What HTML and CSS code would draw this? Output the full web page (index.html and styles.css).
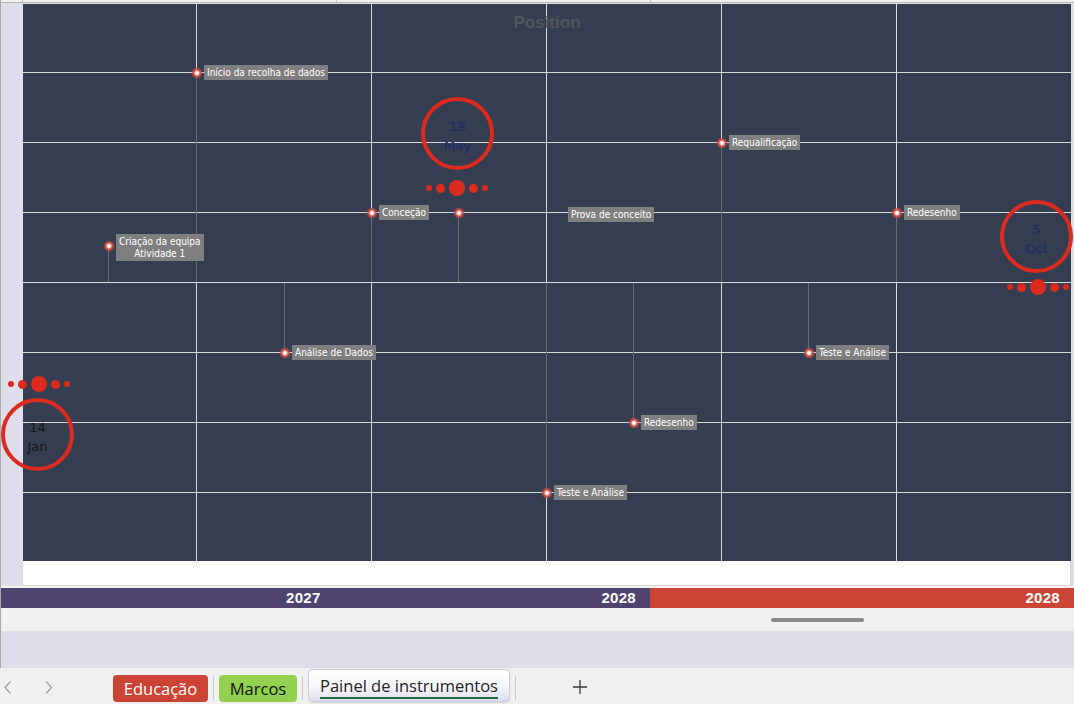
FILE: index.html
```html
<!DOCTYPE html>
<html lang="pt">
<head>
<meta charset="utf-8">
<title>Painel de instrumentos</title>
<link rel="stylesheet" href="styles.css">
</head>
<body>
<div class="upper">
  <div class="colhead"><span class="cell c0"></span><span class="cell c1"></span><span class="cell c2"></span><span class="cell c3"></span></div>
  <div class="rule"></div>
  <div class="rule2"></div>
  <div class="sheet">
    <div class="gutter"></div>
    <div class="chart">
      <div class="plot">
        <svg class="grid" width="1048" height="557" viewBox="0 0 1048 557">
          <g class="gl">
            <line x1="173.5" y1="0" x2="173.5" y2="557"/>
            <line x1="348.5" y1="0" x2="348.5" y2="557"/>
            <line x1="523.5" y1="0" x2="523.5" y2="557"/>
            <line x1="698.5" y1="0" x2="698.5" y2="557"/>
            <line x1="873.5" y1="0" x2="873.5" y2="557"/>
            <line x1="0" y1="68.5" x2="1048" y2="68.5"/>
            <line x1="0" y1="138.5" x2="1048" y2="138.5"/>
            <line x1="0" y1="208.5" x2="1048" y2="208.5"/>
            <line x1="0" y1="278.5" x2="1048" y2="278.5"/>
            <line x1="0" y1="348.5" x2="1048" y2="348.5"/>
            <line x1="0" y1="418.5" x2="1048" y2="418.5"/>
            <line x1="0" y1="488.5" x2="1048" y2="488.5"/>
          </g>
          <g class="stem">
            <line x1="85.5" y1="241" x2="85.5" y2="278"/>
            <line x1="173.5" y1="68" x2="173.5" y2="278"/>
            <line x1="261.5" y1="279" x2="261.5" y2="348"/>
            <line x1="348.5" y1="209" x2="348.5" y2="278"/>
            <line x1="435.5" y1="209" x2="435.5" y2="278"/>
            <line x1="523.5" y1="279" x2="523.5" y2="488"/>
            <line x1="610.5" y1="279" x2="610.5" y2="418"/>
            <line x1="698.5" y1="139" x2="698.5" y2="278"/>
            <line x1="785.5" y1="279" x2="785.5" y2="348"/>
            <line x1="873.5" y1="209" x2="873.5" y2="278"/>
          </g>
        </svg>

        <div class="title">Position</div>

        <div class="node" style="left:85.5px;top:241.5px"><span class="dot"></span><span class="tag two">Criação da equipa<br>Atividade 1</span></div>
        <div class="node" style="left:173.5px;top:68.5px"><span class="dot"></span><span class="tag">Início da recolha de dados</span></div>
        <div class="node" style="left:261.5px;top:348.5px"><span class="dot"></span><span class="tag">Análise de Dados</span></div>
        <div class="node" style="left:348.5px;top:208.5px"><span class="dot"></span><span class="tag">Conceção</span></div>
        <div class="node" style="left:435.5px;top:208.5px"><span class="dot"></span></div>
        <div class="node" style="left:537.5px;top:210.5px"><span class="tag">Prova de conceito</span></div>
        <div class="node" style="left:523.5px;top:488.5px"><span class="dot"></span><span class="tag">Teste e Análise</span></div>
        <div class="node" style="left:610.5px;top:418.5px"><span class="dot"></span><span class="tag">Redesenho</span></div>
        <div class="node" style="left:698.5px;top:138.5px"><span class="dot"></span><span class="tag">Requalificação</span></div>
        <div class="node" style="left:785.5px;top:348.5px"><span class="dot"></span><span class="tag">Teste e Análise</span></div>
        <div class="node" style="left:873.5px;top:208.5px"><span class="dot"></span><span class="tag">Redesenho</span></div>

        <div class="bubble" style="left:398px;top:93px"><span>18</span><span>May</span></div>
        <div class="beads" style="left:403px;top:176px"><i class="b1"></i><i class="b2"></i><i class="b3"></i><i class="b2"></i><i class="b1"></i></div>

        <div class="bubble" style="left:977px;top:196px"><span>5</span><span>Oct</span></div>
        <div class="beads" style="left:984px;top:275px"><i class="b1"></i><i class="b2"></i><i class="b3"></i><i class="b2"></i><i class="b1"></i></div>

        <div class="bubble dark" style="left:-22px;top:394px"><span>14</span><span>Jan</span></div>
        <div class="beads" style="left:-15px;top:372px"><i class="b1"></i><i class="b2"></i><i class="b3"></i><i class="b2"></i><i class="b1"></i></div>
      </div>
      <div class="plot-foot"></div>
    </div>
    <div class="gutter-r"></div>
  </div>
  <div class="years">
    <div class="y-a"><span class="t1">2027</span><span class="t2">2028</span></div>
    <div class="y-b"><span>2028</span></div>
  </div>
  <div class="hscroll"><span class="thumb"></span></div>
  <div class="blank"></div>
</div>
<div class="tabbar">
  <div class="nav">
    <svg class="chev first" width="8" height="13" viewBox="0 0 8 13"><path d="M6.5 0.5 L1 6.5 L6.5 12.5"/></svg>
    <svg class="chev" width="8" height="13" viewBox="0 0 8 13"><path d="M1 0.5 L6.5 6.5 L1 12.5"/></svg>
  </div>
  <div class="tab red">Educação</div>
  <span class="sep"></span>
  <div class="tab green">Marcos</div>
  <span class="sep"></span>
  <div class="tab active"><span class="lbl">Painel de instrumentos</span></div>
  <span class="sep"></span>
  <svg class="plus" width="14" height="14" viewBox="0 0 14 14"><path d="M7 0 V14 M0 7 H14"/></svg>
</div>
</body>
</html>
```

FILE: styles.css
```css
* { box-sizing: border-box; margin: 0; padding: 0; }
html, body { width: 1074px; height: 704px; overflow: hidden; }
body { background: #f0f0f0; font-family: "Liberation Sans", Arial, sans-serif; }

.upper { border-left: 1px solid #a9a9a9; background: #f0f0f0; }

.colhead { display: flex; height: 2px; background: #f3f3f3; }
.cell { display: block; height: 2px; border-right: 1px solid #c4c4c4; }
.c0 { width: 22px; }
.c1 { width: 314px; }
.c2 { width: 314px; }
.c3 { flex: 1; border-right: 0; }
.rule { height: 1px; background: #b3b3b3; }
.rule2 { height: 1px; background: #e4e4e4; }

.sheet { display: flex; height: 582px; }
.gutter { width: 22px; background: #dfdde9; }
.gutter-r { flex: 1; background: #dfdde9; }
.chart { width: 1048px; display: flex; flex-direction: column; }
.plot { position: relative; height: 557px; background: #353e50; }
.plot-foot { flex: 1; background: #fff; border-bottom: 1px solid #d4d4d4; border-right: 1px solid #d4d4d4; }

.grid { position: absolute; left: 0; top: 0; display: block; }
.gl line { stroke: #d9d9d9; stroke-width: 1; }
.stem line { stroke: #6a6a6a; stroke-width: 1; }

.title {
  position: absolute; left: 0; right: 0; top: 9px;
  text-align: center; font: bold 17px/20px "Liberation Sans", Arial, sans-serif;
  color: #50555e;
}

.node { position: absolute; width: 0; height: 0; }
.dot {
  position: absolute; left: -6px; top: -6px; width: 12px; height: 12px; border-radius: 50%;
  background: radial-gradient(circle closest-side, #fff 0, #fff 20%, #f6c6bf 32%, #d8534a 52%, rgba(205,70,60,.6) 76%, rgba(205,70,60,0) 100%);
}
.tag {
  position: absolute; left: 7.5px; top: -7.5px; height: 15px;
  padding: 0 3px; background: #7f7f7f; color: #fff; white-space: nowrap;
  font-family: "DejaVu Sans Condensed", "Liberation Sans", Arial, sans-serif;
  font-size: 10px; line-height: 15px;
}
.tag.two { top: -11.5px; height: 27px; line-height: 12px; padding: 1.5px 3px; text-align: center; }

.bubble {
  position: absolute; width: 73px; height: 73px; border: 4px solid #dc2a1f; border-radius: 50%;
  display: flex; flex-direction: column; align-items: center; justify-content: center;
  padding-top: 4px;
  font: 13px/19px "DejaVu Sans", sans-serif; color: #1a2b6c;
}
.bubble.dark { color: #151515; }
.beads { position: absolute; height: 16px; display: flex; align-items: center; gap: 4px; }
.beads i { display: block; border-radius: 50%; background: #dc2a1f; }
.beads .b1 { width: 6px; height: 6px; }
.beads .b2 { width: 9px; height: 9px; }
.beads .b3 { width: 16px; height: 16px; }

.years { display: flex; height: 20px; margin-top: 2px; color: #fff; font: bold 15px/20px "Liberation Sans", Arial, sans-serif; letter-spacing: 0.3px; }
.y-a { width: 649px; background: #4f4470; display: flex; }
.y-a .t1 { margin-left: 285px; }
.y-a .t2 { margin-left: auto; margin-right: 14px; }
.y-b { flex: 1; background: #cb4535; text-align: right; padding-right: 14px; }

.hscroll { height: 23px; padding-top: 10px; }
.thumb { display: block; width: 93px; height: 4px; margin-left: 770px; border-radius: 2px; background: #8a8a8a; }

.blank { height: 37px; background: #dfdde9; }

.tabbar { height: 36px; display: flex; align-items: flex-start; background: #f0f0f0; font-family: "Open Sans", "Noto Sans", sans-serif; font-size: 16.5px; }
.nav { width: 113px; display: flex; margin-top: 13px; padding-left: 4px; }
.chev { display: block; }
.chev path { fill: none; stroke: #9d9d9d; stroke-width: 1.2; }
.chev.first { margin-right: 33px; }
.tab { height: 27px; margin-top: 7px; border-radius: 4px; display: flex; align-items: center; justify-content: center; line-height: 20px; }
.tab.red { width: 95px; background: #cb4335; color: #fff; }
.tab.green { width: 78px; background: #92d050; color: #111; }
.sep { display: block; width: 1px; height: 24px; margin: 8px 5px 0; background: #c9c9c9; }
.tab.active {
  width: 202px; height: 33px; margin-top: 1px;
  background: linear-gradient(to bottom, #ffffff 0%, #f6f5fa 55%, #dedcec 100%);
  border: 1px solid #cfcfd9; border-radius: 5px;
  box-shadow: 0 1px 2px rgba(0,0,0,.12);
  align-items: flex-start; color: #242424;
}
.lbl { display: block; margin-top: 6px; padding-bottom: 1px; border-bottom: 2px solid #1c7044; }
.plus { display: block; margin: 12px 0 0 52px; }
.plus path { stroke: #3a3a3a; stroke-width: 1.3; fill: none; }
```
